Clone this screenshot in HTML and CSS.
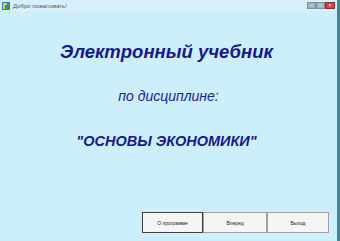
FILE: index.html
```html
<!DOCTYPE html>
<html lang="ru">
<head>
  <meta charset="UTF-8" />
  <title>Добро пожаловать!</title>
  <link rel="stylesheet" href="styles.css">
</head>
<body>
  <div class="window">
    <div class="titlebar">
      <svg class="app-icon" width="8" height="8" viewBox="0 0 8 8">
        <rect x="0" y="0" width="8" height="8" fill="#2f7fd0"/>
        <path d="M1 1h4v2H3v4H1z" fill="#f0d020"/>
        <path d="M5 3h2v4H4V5h1z" fill="#30a040"/>
      </svg>
      <span class="title">Добро пожаловать!</span>
      <div class="controls">
        <span class="ctl">–</span>
        <span class="ctl">□</span>
        <span class="ctl close">×</span>
      </div>
    </div>
    <div class="content">
      <h1>Электронный учебник</h1>
      <p class="subject-label">по дисциплине:</p>
      <h2>"ОСНОВЫ ЭКОНОМИКИ"</h2>
    </div>
    <div class="buttons">
      <button class="btn active">О программе</button>
      <button class="btn">Вперед</button>
      <button class="btn last">Выход</button>
    </div>
  </div>
</body>
</html>
```

FILE: styles.css
```css
body {
  margin: 0;
  padding: 0;
  font-family: "Liberation Sans", Arial, sans-serif;
  background-color: #cdeefb;
}

.window {
  width: 337px;
  height: 241px;
  display: flex;
  flex-direction: column;
  background-color: #cdeefb;
  border-right: 3px solid #3a8a9a;
}

.titlebar {
  height: 11px;
  display: flex;
  align-items: center;
  padding: 0 2px;
  background-color: #d6f1fb;
}

.app-icon {
  margin-right: 3px;
}

.title {
  font-size: 6px;
  color: #555;
  flex: 1;
}

.controls {
  display: flex;
}

.ctl {
  width: 7px;
  height: 5px;
  font-size: 5px;
  line-height: 5px;
  text-align: center;
  color: #fff;
  background-color: #9ab4c8;
  border: 1px solid #7a90a0;
}

.ctl.close {
  width: 8px;
  background-color: #d04040;
  border-color: #903030;
}

.content {
  flex: 1;
  display: flex;
  flex-direction: column;
  align-items: center;
  color: #18188a;
  font-style: italic;
}

h1 {
  margin: 30px 0 0 -4px;
  font-size: 18.5px;
  font-weight: bold;
}

.subject-label {
  margin: 25px 0 0;
  font-size: 14px;
  color: #20209a;
}

h2 {
  margin: 29px 0 0 -4px;
  font-size: 14.5px;
  font-weight: bold;
}

.buttons {
  display: flex;
  justify-content: flex-end;
  padding: 0 8px 8px 0;
}

.btn {
  width: 64px;
  height: 21px;
  font-family: "Liberation Sans", Arial, sans-serif;
  font-size: 5px;
  color: #222;
  background-color: #f5f5f5;
  border: 1px solid #a0a0a0;
  padding: 0;
}

.btn.active {
  width: 61px;
  border: 1px solid #404040;
}

.btn.last {
  width: 62px;
}
```
